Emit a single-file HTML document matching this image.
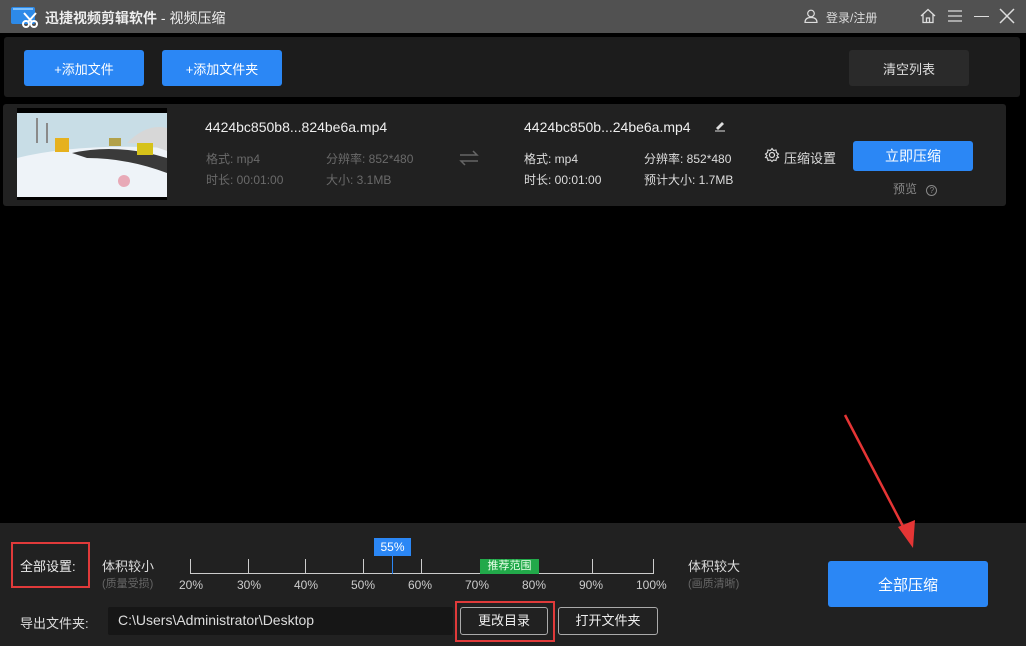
<!DOCTYPE html>
<html><head><meta charset="utf-8"><style>
*{margin:0;padding:0;box-sizing:border-box}
body{width:1026px;height:646px;background:#000;font-family:"Liberation Sans","Noto Sans CJK SC",sans-serif;position:relative;overflow:hidden;color:#ddd}
.a{position:absolute;white-space:nowrap}
.btn{position:absolute;background:#2b87f5;color:#fff;border-radius:3px;display:flex;align-items:center;justify-content:center;font-size:13px}
.g{color:#6a6a6a;font-size:12px}
.w{color:#ddd;font-size:12px}
.tick{position:absolute;top:559px;width:1px;height:14px;background:#ccc}
.pl{position:absolute;top:578px;font-size:12px;color:#ccc}
</style></head><body>
<div class="a" style="left:0;top:0;width:1026px;height:33px;background:#515151"></div>
<svg class="a" style="left:10px;top:5px" width="28" height="24" viewBox="0 0 28 24"><rect x="1" y="2" width="24" height="17" rx="2" fill="#2d8ae8"/><rect x="3" y="3" width="20" height="2" fill="#7cc0ff"/><circle cx="16" cy="19" r="3" fill="none" stroke="#fff" stroke-width="2"/><circle cx="24" cy="19" r="3" fill="none" stroke="#fff" stroke-width="2"/><path d="M14 8 L22 17 M26 8 L18 17" stroke="#fff" stroke-width="2"/></svg>
<div class="a" style="left:45px;top:8px;font-size:14px;color:#eee;font-weight:bold">迅捷视频剪辑软件 <span style="font-weight:normal">- 视频压缩</span></div>
<svg class="a" style="left:804px;top:9px" width="14" height="14" viewBox="0 0 14 14"><circle cx="7" cy="4.5" r="3.3" fill="none" stroke="#ddd" stroke-width="1.2"/><path d="M1 13.5 Q1 8.5 7 8.5 Q13 8.5 13 13.5 Z" fill="none" stroke="#ddd" stroke-width="1.2"/></svg>
<div class="a" style="left:826px;top:9px;font-size:12px;color:#ddd">登录/注册</div>
<svg class="a" style="left:919px;top:8px" width="18" height="16" viewBox="0 0 18 16"><path d="M2 8 L9 1.5 L16 8 M4 6.5 V14.5 H14 V6.5 M7.5 14.5 V10 H10.5 V14.5" fill="none" stroke="#ddd" stroke-width="1.3"/></svg>
<svg class="a" style="left:947px;top:9px" width="16" height="14"><path d="M1 2H15M1 7H15M1 12H15" stroke="#ddd" stroke-width="1.3"/></svg>
<div class="a" style="left:974px;top:16px;width:15px;height:1.3px;background:#ddd"></div>
<svg class="a" style="left:999px;top:8px" width="16" height="16"><path d="M1 1L15 15M15 1L1 15" stroke="#ddd" stroke-width="1.5"/></svg>

<div class="a" style="left:4px;top:37px;width:1016px;height:60px;background:#1c1c1c;border-radius:3px"></div>
<div class="btn" style="left:24px;top:50px;width:120px;height:36px">+添加文件</div>
<div class="btn" style="left:162px;top:50px;width:120px;height:36px">+添加文件夹</div>
<div class="btn" style="left:849px;top:50px;width:120px;height:36px;background:#2a2a2a;color:#ddd">清空列表</div>

<div class="a" style="left:3px;top:104px;width:1003px;height:102px;background:#212121;border-radius:3px"></div>
<div class="a" style="left:17px;top:108px;width:150px;height:92px;background:#000"></div>
<svg class="a" style="left:17px;top:113px" width="150" height="84" viewBox="0 0 150 84"><rect width="150" height="84" fill="#c8dde6"/><path d="M0 45 Q60 30 150 35 V84 H0Z" fill="#eef3f8"/><path d="M55 40 Q100 30 150 45 V60 Q110 45 70 45Z" fill="#3a3a3a"/><path d="M110 30 Q130 10 150 15 V38 Q130 30 110 30Z" fill="#d7d7d7"/><rect x="38" y="25" width="14" height="14" fill="#e6b11e"/><rect x="120" y="30" width="16" height="12" fill="#d6c21a"/><rect x="92" y="25" width="12" height="8" fill="#b2a14a"/><circle cx="107" cy="68" r="6" fill="#e8a9b7"/><path d="M20 30 V5 M30 30 V10" stroke="#8a8a8a" stroke-width="2"/></svg>
<div class="a" style="left:205px;top:119px;font-size:14px;color:#eee">4424bc850b8...824be6a.mp4</div>
<div class="a g" style="left:206px;top:150px">格式: mp4</div>
<div class="a g" style="left:326px;top:150px">分辨率: 852*480</div>
<div class="a g" style="left:206px;top:171px">时长: 00:01:00</div>
<div class="a g" style="left:326px;top:171px">大小: 3.1MB</div>
<svg class="a" style="left:459px;top:150px" width="20" height="16"><path d="M1 5H18L14 1M19 11H2L6 15" fill="none" stroke="#666" stroke-width="1.5"/></svg>
<div class="a" style="left:524px;top:119px;font-size:14px;color:#eee">4424bc850b...24be6a.mp4</div>
<svg class="a" style="left:714px;top:120px" width="12" height="12"><path d="M2 8L8 2L10 4L4 10Z" fill="#ddd"/><path d="M1 11H11" stroke="#ddd"/></svg>
<div class="a w" style="left:524px;top:150px">格式: mp4</div>
<div class="a w" style="left:644px;top:150px">分辨率: 852*480</div>
<div class="a w" style="left:524px;top:171px">时长: 00:01:00</div>
<div class="a w" style="left:644px;top:171px">预计大小: 1.7MB</div>
<svg class="a" style="left:764px;top:147px" width="16" height="16" viewBox="0 0 16 16"><circle cx="8" cy="8" r="2.5" fill="none" stroke="#ddd" stroke-width="1.2"/><path d="M8 1.5L9.5 3.5L12 3L12.5 5.5L14.5 7L13 8.5L14.5 10.5L12.5 11L12 13.5L9.5 13L8 14.5L6.5 13L4 13.5L3.5 11L1.5 10.5L3 8.5L1.5 7L3.5 5.5L4 3L6.5 3.5Z" fill="none" stroke="#ddd" stroke-width="1.1"/></svg>
<div class="a w" style="left:784px;top:148px;font-size:13px">压缩设置</div>
<div class="btn" style="left:853px;top:141px;width:120px;height:30px;font-size:14px">立即压缩</div>
<div class="a g" style="left:893px;top:180px;color:#888">预览 <span style="display:inline-block;width:11px;height:11px;border:1px solid #888;border-radius:50%;font-size:8px;text-align:center;line-height:9px;margin-left:6px">?</span></div>

<div class="a" style="left:0;top:523px;width:1026px;height:123px;background:#212121"></div>
<div class="a" style="left:20px;top:556px;font-size:13px;color:#eee">全部设置:</div>
<div class="a" style="left:11px;top:542px;width:79px;height:46px;border:2px solid #e03a3a"></div>
<div class="a" style="left:102px;top:556px;font-size:13px;color:#ddd">体积较小</div>
<div class="a" style="left:102px;top:575px;font-size:11px;color:#666">(质量受损)</div>
<div class="a" style="left:190px;top:573px;width:464px;height:1px;background:#ccc"></div>
<div class="tick" style="left:190px"></div><div class="tick" style="left:248px"></div><div class="tick" style="left:305px"></div><div class="tick" style="left:363px"></div><div class="tick" style="left:421px"></div><div class="tick" style="left:592px"></div><div class="tick" style="left:653px"></div>
<div class="a" style="left:392px;top:555px;width:1px;height:19px;background:#2b87f5"></div>
<div class="a" style="left:374px;top:538px;width:37px;height:18px;background:#2b87f5;color:#fff;font-size:12px;text-align:center;line-height:18px">55%</div>
<div class="a" style="left:480px;top:559px;width:59px;height:15px;background:#22a94a;color:#e8ffe8;font-size:11px;text-align:center;line-height:15px">推荐范围</div>
<div class="pl" style="left:179px">20%</div><div class="pl" style="left:237px">30%</div><div class="pl" style="left:294px">40%</div><div class="pl" style="left:351px">50%</div><div class="pl" style="left:408px">60%</div><div class="pl" style="left:465px">70%</div><div class="pl" style="left:522px">80%</div><div class="pl" style="left:579px">90%</div><div class="pl" style="left:636px">100%</div>
<div class="a" style="left:688px;top:556px;font-size:13px;color:#ddd">体积较大</div>
<div class="a" style="left:688px;top:575px;font-size:11px;color:#666">(画质清晰)</div>
<div class="btn" style="left:828px;top:561px;width:160px;height:46px;font-size:15px">全部压缩</div>
<div class="a" style="left:20px;top:613px;font-size:13px;color:#ddd">导出文件夹:</div>
<div class="a" style="left:108px;top:607px;width:345px;height:28px;background:#161616;border-radius:2px;font-size:14px;color:#ddd;padding:5px 10px">C:\Users\Administrator\Desktop</div>
<div class="a" style="left:460px;top:607px;width:88px;height:28px;border:1px solid #aaa;border-radius:3px;font-size:13px;color:#eee;text-align:center;line-height:26px">更改目录</div>
<div class="a" style="left:455px;top:601px;width:100px;height:41px;border:2px solid #e03a3a"></div>
<div class="a" style="left:558px;top:607px;width:100px;height:28px;border:1px solid #aaa;border-radius:3px;font-size:13px;color:#eee;text-align:center;line-height:26px">打开文件夹</div>
<svg class="a" style="left:840px;top:410px" width="80" height="140"><path d="M5 5 L67 124" stroke="#e53535" stroke-width="2.5"/><path d="M58 117 L73 138 L75 110 Z" fill="#e53535"/></svg>
</body></html>
